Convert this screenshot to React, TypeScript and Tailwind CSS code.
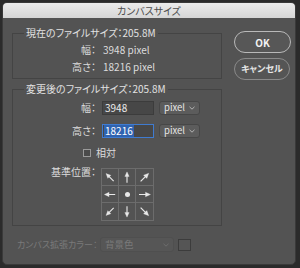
import React from "react";

const font = "[font-family:'Noto_Sans_CJK_JP','Noto_Sans',sans-serif] [font-feature-settings:'palt']";

function Arrow({ angle }: { angle: number }) {
  return (
    <svg width="17" height="17" viewBox="0 0 17 17">
      <g transform={`rotate(${angle} 8.5 8.5)`} fill="#e8e8e8" stroke="#e8e8e8">
        <line x1="8.5" y1="14" x2="8.5" y2="6.5" strokeWidth="1.2" />
        <polygon points="8.5,2.5 6.2,7.5 10.8,7.5" strokeWidth="0.3" />
      </g>
    </svg>
  );
}

function AnchorGrid() {
  const cells: (number | null)[] = [-45, 0, 45, -90, null, 90, -135, 180, 135];
  return (
    <div className="grid grid-cols-3 border border-[#6c6c6c] bg-[#535353] w-[53px]">
      {cells.map((a, i) => (
        <div
          key={i}
          className={
            "flex h-[17px] w-[17px] items-center justify-center border-[#6c6c6c] " +
            (i % 3 !== 2 ? "border-r " : "") +
            (i < 6 ? "border-b" : "")
          }
        >
          {a === null ? <span className="h-[5px] w-[5px] rounded-full bg-[#e8e8e8]" /> : <Arrow angle={a} />}
        </div>
      ))}
    </div>
  );
}

function Select({ label, disabled = false, width }: { label: string; disabled?: boolean; width: string }) {
  return (
    <div
      className={
        "flex h-[14px] items-center justify-between rounded-[3px] border pl-[4px] pr-[4px] text-[9.5px] " +
        width +
        (disabled ? " border-[#4f4f4f] bg-[#565656] text-[#7a7a7a]" : " border-[#474747] bg-[#5c5c5c] text-[#e4e4e4]")
      }
    >
      <span className="leading-none">{label}</span>
      <svg width="6" height="4" viewBox="0 0 6 4">
        <polyline points="0.5,0.8 3,3.2 5.5,0.8" fill="none" stroke={disabled ? "#6f6f6f" : "#bdbdbd"} strokeWidth="0.9" />
      </svg>
    </div>
  );
}

export default function App() {
  return (
    <div className={"h-[268px] w-[300px] bg-[#2b2b2b] p-[2px] text-[10px] " + font}>
      <div className="flex h-[263px] w-[294px] flex-col overflow-hidden rounded-[5px] bg-[#535353] border border-[#3a3a3a]">
        <div className="flex h-[15px] shrink-0 items-center justify-center bg-gradient-to-b from-[#ececec] to-[#d6d6d6] text-[10px] leading-none text-[#4d4d4d]">
          カンバスサイズ
        </div>

        <div className="flex gap-[12px] pl-[9px] pt-[9px]">
          <div className="flex w-[210px] flex-col">
            <fieldset className="border border-[#444444] pb-[5px]">
              <legend className="ml-[11px] px-[2px] leading-[12px] text-[#e2e2e2]">現在のファイルサイズ：205.8M</legend>
              <div className="mt-[5px] grid grid-cols-[83px_1fr] gap-x-[7px] gap-y-[5px] leading-[12px] text-[#dcdcdc]">
                <span className="text-right">幅：</span>
                <span>3948 pixel</span>
                <span className="text-right">高さ：</span>
                <span>18216 pixel</span>
              </div>
            </fieldset>

            <fieldset className="mt-[4px] border border-[#444444] pb-[4px]">
              <legend className="ml-[11px] px-[2px] leading-[12px] text-[#e2e2e2]">変更後のファイルサイズ：205.8M</legend>
              <div className="mt-[6px] grid grid-cols-[83px_auto] items-center gap-x-[6px] text-[#dcdcdc]">
                <span className="text-right leading-[12px]">幅：</span>
                <div className="flex items-center gap-[5px]">
                  <div className="flex h-[14px] w-[52px] items-center border border-[#3c3c3c] bg-[#474747] pl-[2px] leading-none text-[#ececec]">
                    3948
                  </div>
                  <Select label="pixel" width="w-[41px]" />
                </div>

                <span className="mt-[9px] text-right leading-[12px]">高さ：</span>
                <div className="mt-[9px] flex items-center gap-[5px]">
                  <div className="flex h-[14px] w-[52px] items-center border border-[#3f7bd0] bg-[#474747] pl-[1px] leading-none">
                    <span className="bg-[#2f63b0] px-[1px] py-[1px] text-white">18216</span>
                  </div>
                  <Select label="pixel" width="w-[41px]" />
                </div>

                <span />
                <label className="-ml-[19px] mt-[9px] flex items-center gap-[5px] leading-[12px]">
                  <span className="h-[8px] w-[8px] border border-[#9a9a9a] bg-[#4a4a4a]" />
                  相対
                </label>

                <span className="mt-[6px] self-start pt-[1px] text-right leading-[12px]">基準位置：</span>
                <div className="-ml-[1px] mt-[9px]">
                  <AnchorGrid />
                </div>
              </div>
            </fieldset>
          </div>

          <div className="mt-[4px] flex flex-col gap-[5px]">
            <button className="h-[22px] w-[57px] rounded-full border border-[#b9b9b9] bg-[#575757] text-[10px] font-bold text-[#f2f2f2]">
              OK
            </button>
            <button className="h-[22px] w-[56px] rounded-full border border-[#8a8a8a] bg-[#555555] text-[9px] font-bold text-[#e6e6e6]">
              キャンセル
            </button>
          </div>
        </div>

        <div className="mt-[11px] flex items-center pl-[14px] text-[#7a7a7a]">
          <span className="w-[83px] whitespace-nowrap text-[9px] leading-[12px]">カンバス拡張カラー：</span>
          <Select label="背景色" disabled width="h-[15px] w-[74px]" />
          <span className="ml-[4px] h-[12px] w-[13px] border border-[#3c3c3c] bg-[#555555]" />
        </div>
      </div>
    </div>
  );
}
